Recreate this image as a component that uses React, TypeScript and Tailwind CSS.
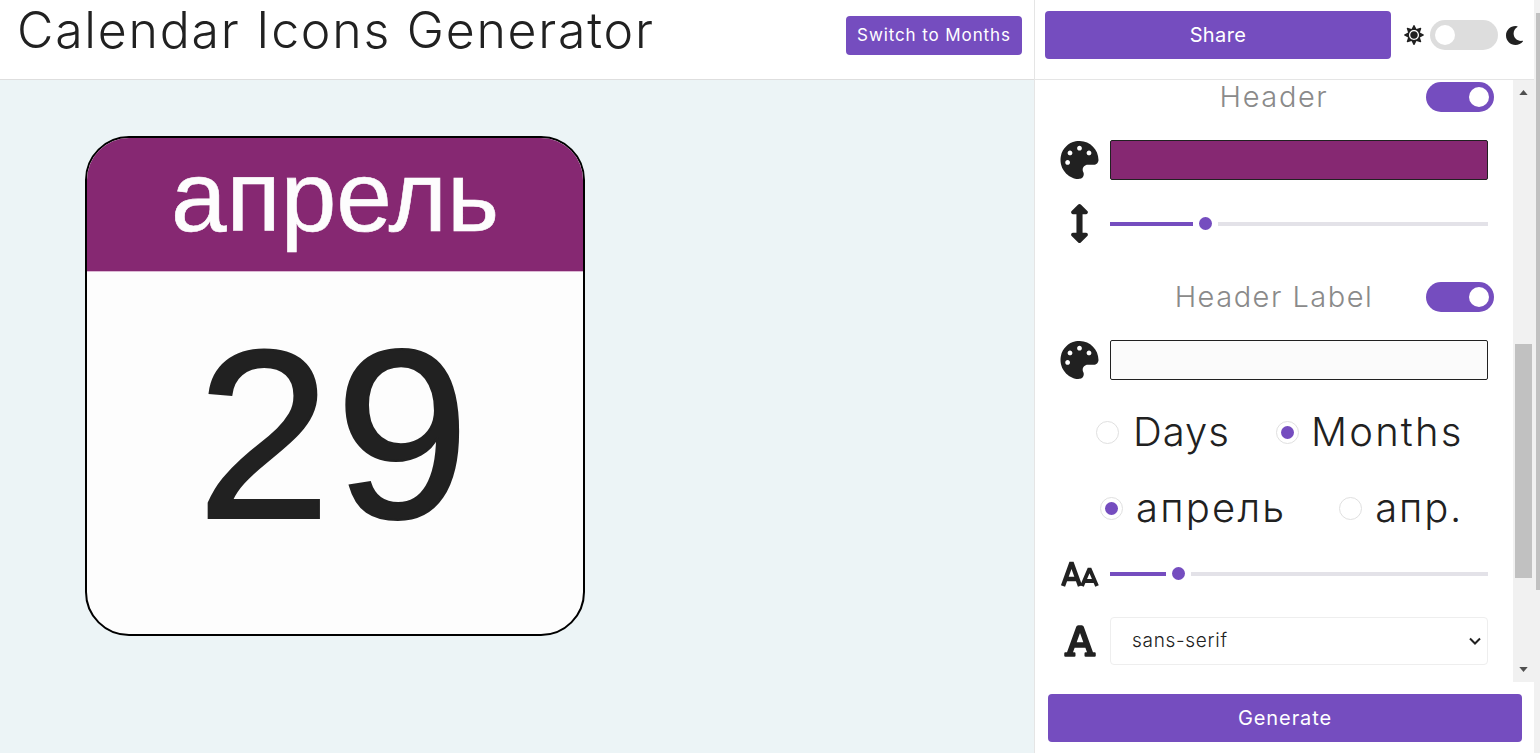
import React from 'react';
import { FaPalette, FaArrowsAltV, FaFont, FaSun, FaMoon } from 'react-icons/fa';

function Toggle({ on }: { on: boolean }) {
  return (
    <div className={`flex items-center w-[68px] h-[30px] rounded-full px-[5px] ${on ? 'justify-end bg-[#754dbf]' : 'justify-start bg-[#dddddd]'}`}>
      <div className="w-5 h-5 rounded-full bg-white" />
    </div>
  );
}

function Slider({ fill }: { fill: number }) {
  return (
    <div className="flex items-center flex-1 h-4">
      <div className="h-1 bg-[#754dbf]" style={{ width: fill }} />
      <div className="w-[13px] h-[13px] rounded-full bg-[#754dbf] mx-[6px] shrink-0" />
      <div className="h-1 flex-1 bg-[#e3e2e8]" />
    </div>
  );
}

function Radio({ on, label, text, gap }: { on: boolean; label: string; text: string; gap: string }) {
  return (
    <div className={`flex items-center ${gap}`}>
      <div className="flex items-center justify-center w-[23px] h-[23px] rounded-full border border-[#e0e0e0] bg-white">
        {on && <div className="w-[13px] h-[13px] rounded-full bg-[#754dbf]" />}
      </div>
      <span className={`text-[40px] font-light text-[#212121] ${text}`}>{label}</span>
    </div>
  );
}

// big and small letter A side by side, the font size icon
function FontSizeIcon() {
  return (
    <svg viewBox="0 0 39 39" className="w-[39px] h-[39px] shrink-0" fill="none" stroke="#212121" strokeWidth="4.4" strokeLinejoin="bevel">
      <path d="M3 32L11.5 8.5L20 32M6 25H17" />
      <path d="M22 32L29.5 14.5L37 32M24 27H35" strokeWidth="3.8" />
    </svg>
  );
}

export default function App() {
  return (
    <div className="flex w-[1540px] h-[753px] overflow-hidden bg-white text-[#212121] font-['Inter','Liberation_Sans',sans-serif]">
      {/* preview side */}
      <div className="flex flex-col w-[1035px] shrink-0 border-r border-[#e5e5e5]">
        <header className="flex items-start justify-between h-20 shrink-0 bg-white border-b border-[#dedede] pl-[17px] pr-[12px]">
          <h1 className="text-[50px] leading-[60px] font-light tracking-[1.75px] whitespace-nowrap">Calendar Icons Generator</h1>
          <button className="mt-4 w-[176px] h-[39px] rounded-[4px] bg-[#754dbf] text-white text-[17px] tracking-[0.9px] whitespace-nowrap">Switch to Months</button>
        </header>
        <main className="flex-1 bg-[#ecf4f6] pl-[85px] pt-[56px]">
          <div className="flex flex-col w-[500px] h-[500px] rounded-[44px] border-2 border-black bg-[#fdfdfd] overflow-hidden font-['Liberation_Sans',sans-serif]">
            <div className="flex justify-center h-[134px] bg-[#862872] text-[#fdfdfd] text-[100px] leading-[116px] shrink-0 border-b border-[#dcb8d4] [-webkit-text-stroke:0.6px_#fdfdfd]">апрель</div>
            <div className="flex justify-center text-[#212121] text-[242px] leading-[325px] tracking-[4px] [-webkit-text-stroke:2px_#212121]">29</div>
          </div>
        </main>
      </div>

      {/* settings side */}
      <div className="flex flex-col flex-1 min-w-0">
        <div className="flex items-start h-20 shrink-0 border-b border-[#e5e5e5] pl-[10px] pt-[11px]">
          <button className="w-[346px] h-12 rounded-[4px] bg-[#754dbf] text-white text-[20px] tracking-[0.4px]">Share</button>
          <div className="flex items-center ml-[13px] mt-[9px]">
            <FaSun className="w-5 h-5" />
            <div className="ml-[6px] mr-[7px]"><Toggle on={false} /></div>
            <FaMoon className="w-[19px] h-[19px]" />
          </div>
        </div>

        <div className="flex h-[602px] shrink-0">
          <div className="flex-1 overflow-hidden pl-[25px] pr-[25px] pt-[2px]">
            <div className="flex items-center h-[30px]">
              <div className="flex-1 text-center text-[29px] font-light text-[#8a8a8a] pl-[62px] tracking-[1.6px] whitespace-nowrap">Header</div>
              <div className="-mr-[6px]"><Toggle on /></div>
            </div>
            <div className="flex items-center gap-[11px] mt-[28px]">
              <FaPalette className="w-[39px] h-[38px] shrink-0" />
              <div className="flex-1 h-10 rounded-[2px] border border-[#212121] bg-[#862872]" />
            </div>
            <div className="flex items-center gap-[11px] mt-[24px]">
              <div className="flex justify-center w-[39px] shrink-0"><FaArrowsAltV className="w-[39px] h-[39px]" /></div>
              <Slider fill={83} />
            </div>

            <div className="flex items-center h-[30px] mt-[39px]">
              <div className="flex-1 text-center text-[29px] font-light text-[#8a8a8a] pl-[62px] tracking-[1.5px] whitespace-nowrap">Header Label</div>
              <div className="-mr-[6px]"><Toggle on /></div>
            </div>
            <div className="flex items-center gap-[11px] mt-[28px]">
              <FaPalette className="w-[39px] h-[38px] shrink-0" />
              <div className="flex-1 h-10 rounded-[2px] border border-[#212121] bg-[#fbfbfb]" />
            </div>

            <div className="flex items-center h-[56px] mt-[24px] pl-[36px]">
              <Radio on={false} label="Days" text="tracking-[1px]" gap="gap-[14px]" />
              <div className="ml-[46px]"><Radio on label="Months" text="tracking-[2.2px]" gap="gap-[12px]" /></div>
            </div>
            <div className="flex items-center h-[56px] mt-[20px] pl-[40px]">
              <Radio on label="апрель" text="tracking-[2.2px]" gap="gap-[13px]" />
              <div className="ml-[53px]"><Radio on={false} label="апр." text="tracking-[1.75px]" gap="gap-[13px]" /></div>
            </div>

            <div className="flex items-center gap-[11px] mt-[18px]">
              <FontSizeIcon />
              <Slider fill={56} />
            </div>
            <div className="flex items-center gap-[11px] mt-[24px]">
              <div className="flex justify-center w-[39px] shrink-0"><FaFont className="w-9 h-9" /></div>
              <div className="flex items-center justify-between flex-1 h-12 rounded-[4px] border border-[#eeeeee] bg-white pl-[21px] pr-[6px] text-[19px] font-light tracking-[0.7px]">
                <span>sans-serif</span>
                <svg viewBox="0 0 12 8" className="w-3 h-2" fill="none" stroke="#212121" strokeWidth="2"><path d="M1 1.5l5 5 5-5" /></svg>
              </div>
            </div>
          </div>

          {/* inner scrollbar */}
          <div className="flex flex-col items-center w-[21px] shrink-0 bg-[#f1f1f1]">
            <svg viewBox="0 0 10 6" className="w-[9px] h-[5px] mt-[10px] fill-[#505050]"><path d="M5 0l5 6H0z" /></svg>
            <div className="w-[17px] h-[234px] bg-[#c1c1c1] mt-[249px]" />
            <svg viewBox="0 0 10 6" className="w-[9px] h-[5px] mt-[89px] fill-[#505050]"><path d="M0 0h10L5 6z" /></svg>
          </div>
        </div>

        <div className="flex-1 pl-[13px] pt-[12px]">
          <button className="w-[474px] h-12 rounded-[4px] bg-[#754dbf] text-white text-[20px] tracking-[0.9px]">Generate</button>
        </div>
      </div>

      {/* page scrollbar, cut off by the window edge */}
      <div className="w-[6px] shrink-0 bg-[#f1f1f1] pl-[2px] pt-[13px]">
        <div className="h-[577px] bg-[#c1c1c1]" />
      </div>
    </div>
  );
}
